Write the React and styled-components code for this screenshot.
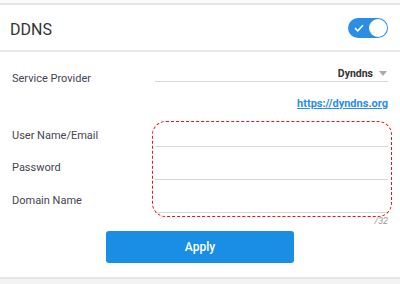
import React, { useState } from "react";
import styled, { createGlobalStyle } from "styled-components";

const GlobalStyle = createGlobalStyle`
  body {
    margin: 0;
    background: #f4f4f4;
    font-family: Roboto, "Liberation Sans", sans-serif;
  }
`;

const Page = styled.div`
  width: 400px;
  height: 284px;
  padding-top: 3px;
  box-sizing: border-box;
  background: linear-gradient(#fafafa 0 3px, #f3f3f3 3px);
`;

const Card = styled.div`
  background: #fff;
  border-top: 2px solid #e6e6e6;
  border-bottom: 2px solid #e6e6e6;
`;

const Header = styled.div`
  height: 45px;
  display: flex;
  align-items: center;
  justify-content: space-between;
  padding: 0 12px 0 10px;
  border-bottom: 2px solid #e8e8e8;
`;

const Title = styled.h2`
  margin: 0;
  padding-top: 3px;
  font-size: 16px;
  font-weight: 400;
  color: #333;
`;

const Toggle = styled.button`
  width: 40px;
  height: 20px;
  border-radius: 10px;
  border: none;
  padding: 0;
  background: ${({ $on }) => ($on ? "#2a8ee6" : "#ccc")};
  position: relative;
  cursor: pointer;
`;

const Knob = styled.span`
  position: absolute;
  top: 1px;
  left: ${({ $on }) => ($on ? "21px" : "1px")};
  width: 18px;
  height: 18px;
  border-radius: 50%;
  background: #fff;
`;

const Check = styled.svg`
  position: absolute;
  left: 6px;
  top: 6px;
`;

const Body = styled.div`
  position: relative;
  padding: 14px 12px;
`;

const Row = styled.div`
  display: grid;
  grid-template-columns: 143px 1fr;
  align-items: center;
  height: ${({ $h }) => $h}px;
`;

const Label = styled.div`
  font-size: 11px;
  color: #454550;
  padding-top: ${({ $pt }) => $pt || 0}px;
`;

const Field = styled.div`
  align-self: stretch;
  border-bottom: 1px solid #d8d8d8;
`;

const Select = styled.div`
  align-self: start;
  height: 15px;
  border-bottom: 1px solid #d8d8d8;
  display: flex;
  align-items: center;
  justify-content: flex-end;
  gap: 6px;
  font-size: 10.5px;
  font-weight: 700;
  color: #333;
`;

const Caret = styled.span`
  width: 0;
  height: 0;
  border-left: 4px solid transparent;
  border-right: 4px solid transparent;
  border-top: 5px solid #aaa;
  margin-right: 1px;
`;

const LinkRow = styled.div`
  display: flex;
  justify-content: flex-end;
  align-items: center;
  height: 26px;
`;

const Link = styled.a`
  font-size: 11px;
  font-weight: 700;
  color: #2a8ee6;
  text-decoration: underline;
`;

const Mark = styled.div`
  position: absolute;
  left: 152px;
  top: 69px;
  width: 238px;
  height: 94px;
  border: 1.8px dashed #ee1111;
  border-radius: 14px;
`;

const Hint = styled.span`
  position: absolute;
  right: 12px;
  top: 164px;
  font-size: 9px;
  font-style: italic;
  color: #999;
`;

const Actions = styled.div`
  display: flex;
  justify-content: center;
  padding-top: 18px;
`;

const ApplyButton = styled.button`
  width: 188px;
  height: 32px;
  border: none;
  border-radius: 3px;
  background: #1a8de4;
  color: #fff;
  font-family: Roboto, "Liberation Sans", sans-serif;
  font-size: 12px;
  font-weight: 500;
  cursor: pointer;
`;

const fields = [
  { label: "User Name/Email", h: 31 },
  { label: "Password", h: 33 },
  { label: "Domain Name", h: 33 },
];

export default function App() {
  const [on, setOn] = useState(true);

  return (
    <Page>
      <GlobalStyle />
      <Card>
        <Header>
          <Title>DDNS</Title>
          <Toggle $on={on} onClick={() => setOn(!on)}>
            {on && (
              <Check width="10" height="8" viewBox="0 0 10 8">
                <path d="M1 4.2 L3.8 6.8 L9 1.2" fill="none" stroke="#fff" strokeWidth="1.6" />
              </Check>
            )}
            <Knob $on={on} />
          </Toggle>
        </Header>
        <Body>
          <Row $h={24}>
            <Label>Service Provider</Label>
            <Select>
              Dyndns <Caret />
            </Select>
          </Row>
          <LinkRow>
            <Link href="#">https://dyndns.org</Link>
          </LinkRow>
          {fields.map((f) => (
            <Row key={f.label} $h={f.h}>
              <Label $pt={7}>{f.label}</Label>
              <Field />
            </Row>
          ))}
          <Mark />
          <Hint>/32</Hint>
          <Actions>
            <ApplyButton>Apply</ApplyButton>
          </Actions>
        </Body>
      </Card>
    </Page>
  );
}
